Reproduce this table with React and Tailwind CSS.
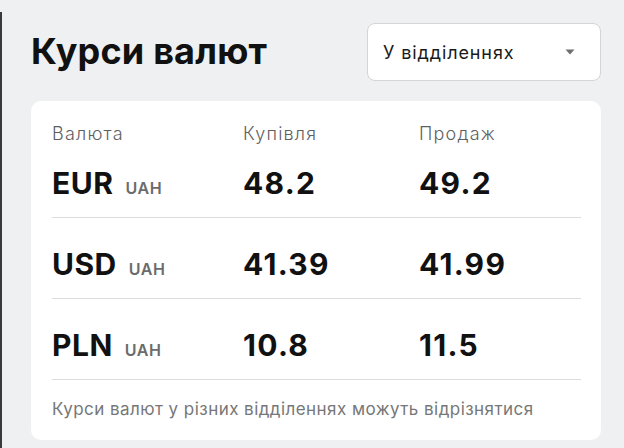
const rates = [
  { code: 'EUR', buy: '48.2', sell: '49.2' },
  { code: 'USD', buy: '41.39', sell: '41.99' },
  { code: 'PLN', buy: '10.8', sell: '11.5' },
];

const Caret = () => (
  <svg width="10" height="6" viewBox="0 0 10 6" className="text-[#6f6f6f]">
    <path d="M0.5 0.5h9L5 5.5z" fill="currentColor" />
  </svg>
);

export default function App() {
  return (
    <div
      className="flex w-[624px] h-[448px] bg-[#eef0f1] text-[#111]"
      style={{ fontFamily: 'Inter, "Noto Sans", sans-serif' }}
    >
      <div className="w-[2px] mt-[12px] bg-[#3a3a3a]" />
      <div className="flex-1 flex flex-col pl-[29px] pr-[23px]">
        {/* Header */}
        <div className="flex items-center justify-between h-[81px] pt-[23px]">
          <h1 className="text-[36px] font-bold tracking-[0.2px] leading-none -mt-[2px]">
            Курси валют
          </h1>
          <button className="w-[234px] h-[58px] flex items-center justify-between pl-[15px] pr-[25px] bg-white border border-[#d3d5d7] rounded-[8px] text-[18px] tracking-[0.9px] text-[#1a1a1a]">
            <span>У відділеннях</span>
            <Caret />
          </button>
        </div>

        {/* Card */}
        <div className="mt-[20px] bg-white rounded-[10px] pl-[21px] pr-[20px] pt-[21px] pb-[21px] h-[339px]">
          <div className="grid grid-cols-[191px_176px_1fr] text-[18px] font-light tracking-[1.2px] text-[#5f5f5f] leading-[24px]">
            <span>Валюта</span>
            <span>Купівля</span>
            <span>Продаж</span>
          </div>

          {rates.map((r, i) => (
            <div
              key={r.code}
              className={`grid grid-cols-[191px_176px_1fr] items-baseline border-b border-[#dcdcdc] ${
                i === 0 ? 'pt-[23px] pb-[20px]' : 'pt-[32px] pb-[20px]'
              }`}
            >
              <div className="flex items-baseline gap-[12px]">
                <span className="text-[30px] font-bold leading-[28px] tracking-[0.5px]">{r.code}</span>
                <span className="text-[16px] font-semibold leading-none tracking-[0.6px] text-[#6b6b6b]">UAH</span>
              </div>
              <span className="text-[30px] font-bold leading-[28px] tracking-[1.3px]">{r.buy}</span>
              <span className="text-[30px] font-bold leading-[28px] tracking-[1.3px]">{r.sell}</span>
            </div>
          ))}

          <p className="pt-[19px] text-[17px] leading-[20px] tracking-[0.45px] text-[#777]">
            Курси валют у різних відділеннях можуть відрізнятися
          </p>
        </div>
      </div>
    </div>
  );
}
